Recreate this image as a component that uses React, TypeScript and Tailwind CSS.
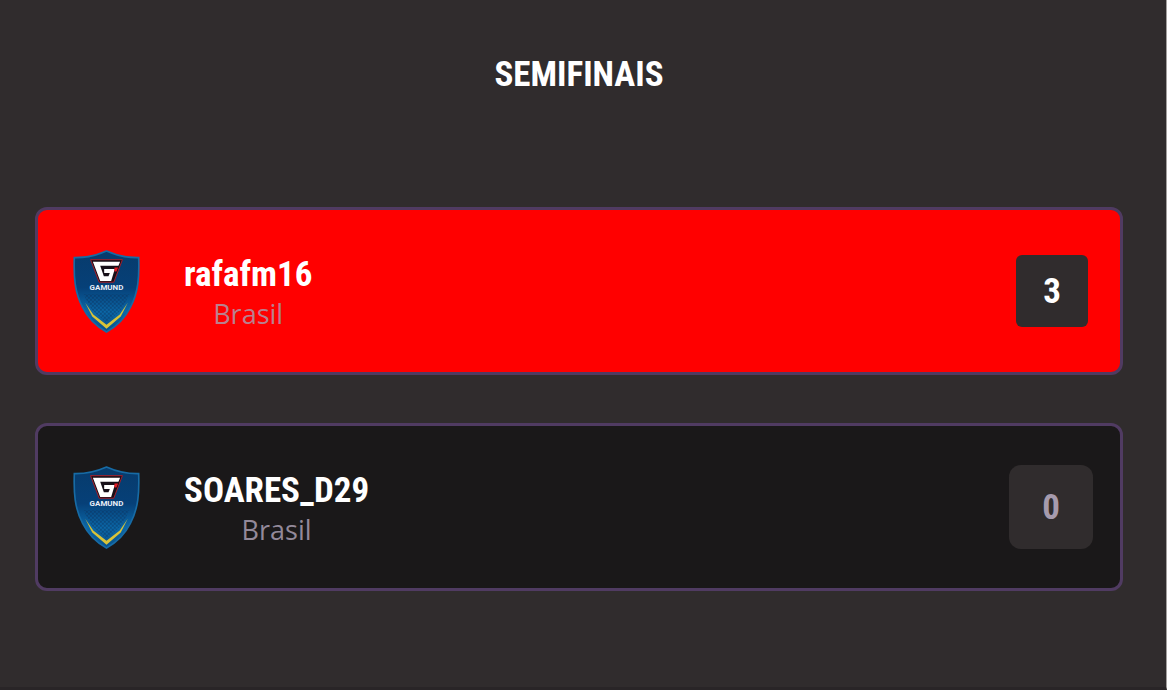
import clsx from "clsx";

interface Player {
  name: string;
  country: string;
  score: number;
  winner: boolean;
}

const players: Player[] = [
  { name: "rafafm16", country: "Brasil", score: 3, winner: true },
  { name: "SOARES_D29", country: "Brasil", score: 0, winner: false },
];

const condensed = "font-['Roboto_Condensed','Liberation_Sans_Narrow',Roboto,sans-serif] font-bold";

function TeamShield({ id }: { id: string }) {
  return (
    <svg viewBox="39 27 202 250" className="w-[67px] h-[83px] shrink-0" role="img" aria-label="Gamund">
      <defs>
        <linearGradient id={`${id}-body`} x1="0" y1="0" x2="0" y2="1">
          <stop offset="0" stopColor="#073b6c" />
          <stop offset="0.45" stopColor="#064078" />
          <stop offset="0.75" stopColor="#0b68a8" />
          <stop offset="1" stopColor="#07508a" />
        </linearGradient>
        <pattern id={`${id}-dots`} width="12" height="12" patternUnits="userSpaceOnUse">
          <circle cx="3" cy="3" r="3" fill="#0a2f5c" />
          <circle cx="9" cy="9" r="3" fill="#0a2f5c" />
        </pattern>
      </defs>
      <path
        d="M140 30Q93 51 43 50C41 108 44 155 68 200Q92 248 140 274Q188 248 212 200C236 155 239 108 237 50Q187 51 140 30Z"
        fill={`url(#${id}-body)`}
        stroke="#176ba5"
        strokeWidth="5"
      />
      <path d="M70 160H210L184 208L140 246L96 208Z" fill={`url(#${id}-dots)`} opacity="0.6" />
      {/* Chevron */}
      <path d="M76 186L100 221L140 252L180 221L204 186L183 227L140 264L97 227Z" fill="#d8c338" />
      {/* G mark */}
      <path d="M92 56H188L162 124H118Z" fill="#170f18" stroke="#a51f2b" strokeWidth="3" />
      <path d="M99 62H181L176 74H121L132 106H146L150 96H133V84H165L154 120H121Z" fill="#fff" />
      <path d="M164 80H175L170 92H164Z" fill="#e51b24" />
      <text
        x="140"
        y="147"
        textAnchor="middle"
        fill="#e8eef7"
        fontSize="24"
        className="font-['Roboto',sans-serif] font-bold"
      >
        GAMUND
      </text>
    </svg>
  );
}

function PlayerCard({ player }: { player: Player }) {
  return (
    <li
      className={clsx(
        "flex items-center h-[168px] pl-[35px] border-3 border-[#503b62] rounded-xl",
        player.winner ? "bg-[#ff0000] pr-8" : "bg-[#1a1819] pr-[27px]"
      )}
    >
      <TeamShield id={player.name} />

      {/* Name & Country */}
      <div className="ml-11 pt-1.5 text-center">
        <h2 className={clsx(condensed, "text-[35px] leading-10 text-white")}>{player.name}</h2>
        <p
          className={clsx(
            "font-['Open_Sans',sans-serif] text-[27px] leading-[38px]",
            player.winner ? "text-[#b9808f]" : "text-[#93899a]"
          )}
        >
          {player.country}
        </p>
      </div>

      {/* Score */}
      <span
        className={clsx(
          condensed,
          "ml-auto flex items-center justify-center bg-[#302c2d] text-[35px] pt-0.5",
          player.winner ? "size-[72px] rounded-md text-white" : "size-[84px] rounded-xl text-[#a69bad]"
        )}
      >
        {player.score}
      </span>
    </li>
  );
}

export default function App() {
  return (
    <main className="min-h-screen bg-[#302c2d] border-r border-[#a3a09f] border-b-3 border-b-[#292527] pt-[55px] pl-[35px] pr-[43px]">
      <h1 className={clsx(condensed, "text-[35px] leading-10 text-center text-white")}>SEMIFINAIS</h1>
      <ul className="mt-28 flex flex-col gap-12">
        {players.map((player) => (
          <PlayerCard key={player.name} player={player} />
        ))}
      </ul>
    </main>
  );
}
